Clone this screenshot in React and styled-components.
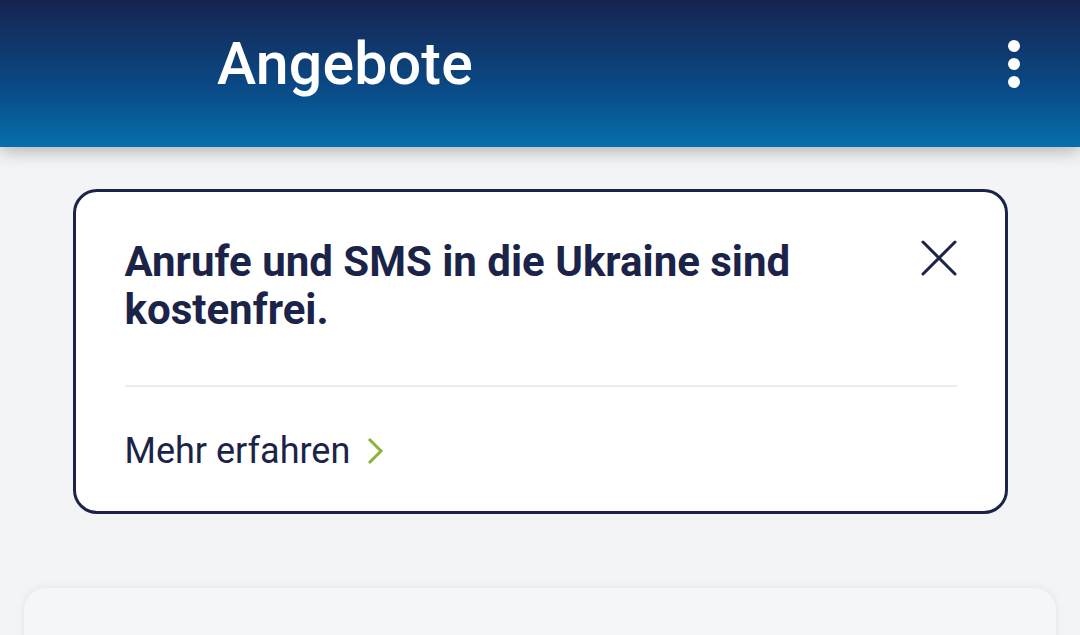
import React from 'react';
import styled, { createGlobalStyle } from 'styled-components';

const GlobalStyle = createGlobalStyle`
  html, body {
    margin: 0;
    padding: 0;
    background: #f3f4f6;
    font-family: Roboto, "Noto Sans", sans-serif;
  }
  * { box-sizing: border-box; }
`;

const Page = styled.div`
  width: 1080px;
  height: 635px;
  overflow: hidden;
  background: #f3f4f6;
`;

const Header = styled.header`
  position: relative;
  height: 147px;
  display: flex;
  align-items: center;
  justify-content: space-between;
  padding: 0 60px 20px 217px;
  background: linear-gradient(180deg, #16244f 0%, #0a4a86 60%, #066fab 100%);
  box-shadow: 0 4px 16px rgba(0, 0, 0, 0.28);
`;

const Title = styled.h1`
  margin: 0;
  color: #ffffff;
  font-size: 59px;
  font-weight: 500;
  letter-spacing: 0.2px;
`;

const MenuButton = styled.button`
  display: flex;
  flex-direction: column;
  gap: 6px;
  padding: 0;
  border: none;
  background: none;
`;

const Dot = styled.span`
  width: 12px;
  height: 12px;
  border-radius: 50%;
  background: #ffffff;
`;

const Content = styled.main`
  display: flex;
  flex-direction: column;
  align-items: center;
  padding-top: 42px;
  gap: 74px;
`;

const Banner = styled.section`
  width: 935px;
  background: #ffffff;
  border: 3px solid #1b2448;
  border-radius: 24px;
  padding: 46px 48px 38px 49px;
`;

const BannerTop = styled.div`
  display: flex;
  justify-content: space-between;
  align-items: flex-start;
  padding-bottom: 51px;
  border-bottom: 2px solid #ececee;
`;

const BannerText = styled.h2`
  margin: 0;
  color: #1b2448;
  font-size: 42px;
  line-height: 48px;
  font-weight: 700;
  max-width: 720px;
`;

const CloseButton = styled.button`
  padding: 0;
  border: none;
  background: none;
  margin-top: 2px;
  display: flex;
`;

const MoreLink = styled.a`
  display: inline-flex;
  align-items: center;
  gap: 16px;
  margin-top: 42px;
  color: #1b2448;
  font-size: 36px;
  line-height: 44px;
  text-decoration: none;
`;

const NextCard = styled.div`
  width: 1032px;
  height: 120px;
  background: #f5f6f8;
  border-radius: 22px;
  box-shadow: 0 0 8px rgba(0, 0, 0, 0.08);
`;

export default function App() {
  return (
    <Page>
      <GlobalStyle />
      <Header>
        <Title>Angebote</Title>
        <MenuButton aria-label="Menü">
          <Dot />
          <Dot />
          <Dot />
        </MenuButton>
      </Header>
      <Content>
        <Banner>
          <BannerTop>
            <BannerText>Anrufe und SMS in die Ukraine sind kostenfrei.</BannerText>
            <CloseButton aria-label="Schließen">
              <svg width="36" height="36" viewBox="0 0 36 36">
                <path d="M2 2 L34 34 M34 2 L2 34" stroke="#1b2448" strokeWidth="3" strokeLinecap="round" />
              </svg>
            </CloseButton>
          </BannerTop>
          <MoreLink href="#">
            Mehr erfahren
            <svg width="18" height="28" viewBox="0 0 18 28">
              <path d="M3 2 L15 14 L3 26" fill="none" stroke="#8db33a" strokeWidth="3" />
            </svg>
          </MoreLink>
        </Banner>
        <NextCard />
      </Content>
    </Page>
  );
}
